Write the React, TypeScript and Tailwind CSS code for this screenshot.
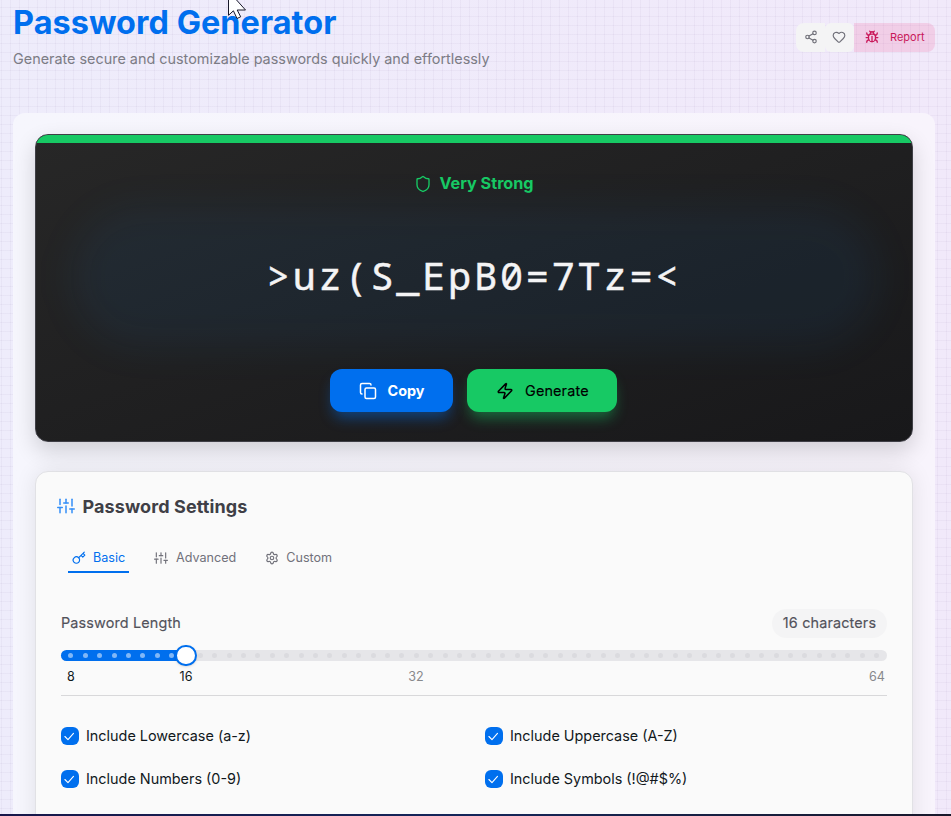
import type { ReactNode } from "react";
import { Bug, Copy, Heart, Settings, Share2, Shield, Zap } from "lucide-react";
import { FiKey, FiSliders } from "react-icons/fi";

const steps = Array.from({ length: 57 }, (_, i) => i + 8);
const selected = 16;

function Check({ children }: { children: ReactNode }) {
  return (
    <label className="flex h-[18px] items-center gap-[7px] text-[14.4px] leading-[18px] whitespace-nowrap text-[#11181c]">
      <span className="flex size-[18px] shrink-0 items-center justify-center rounded-[6px] bg-[#006fee] pr-px">
        <svg width="11" height="11" viewBox="0 0 17 18" fill="none" stroke="white" strokeWidth="1.8" strokeLinecap="round" strokeLinejoin="round">
          <polyline points="1 9 6 14 15 4" />
        </svg>
      </span>
      <span>{children}</span>
    </label>
  );
}

export default function App() {
  return (
    <div className="relative h-[816px] w-[951px] overflow-hidden bg-linear-to-r from-[#eeecfb] to-[#f1e9fa] font-['Inter',sans-serif]">
      <div className="absolute inset-0 bg-[linear-gradient(to_right,#64508c0c_1px,transparent_1px),linear-gradient(to_bottom,#64508c0c_1px,transparent_1px)] bg-[size:9px_9px] bg-[position:1px_7px]" />

      <div className="relative flex h-full flex-col">
        <header className="flex h-[113px] shrink-0 items-start justify-between pr-4 pl-[13px]">
          <div>
            <h1 className="mt-[3px] text-[32.4px] leading-10 font-bold tracking-[0.06px] text-[#006fee]">Password Generator</h1>
            <p className="mt-[5px] text-[14.4px] leading-[22px] text-[#7c7c85]">
              Generate secure and customizable passwords quickly and effortlessly
            </p>
          </div>
          <div className="mt-[23px] flex h-[29px]">
            <button className="flex w-[29px] items-center justify-center rounded-l-[8px] bg-[#f4f4f5] pb-px">
              <Share2 size={14} strokeWidth={2} className="text-[#71717a]" />
            </button>
            <button className="flex w-[29px] items-center justify-center rounded-[6px] bg-[#f4f4f5] pr-[2px] pb-px">
              <Heart size={14} strokeWidth={2} className="text-[#71717a]" />
            </button>
            <button className="flex w-[81px] items-center rounded-r-[8px] bg-[#f31260]/12 pb-px pl-[11px] text-[11px] text-[#c9185a]">
              <Bug size={14} strokeWidth={2.2} />
              <span className="ml-[11px]">Report</span>
            </button>
          </div>
        </header>

        <main className="ml-[13px] w-[922px] flex-1 rounded-t-[12px] bg-linear-to-r from-[#f6f6fd] to-[#f8f4fc] px-[22px] pt-[21px]">
          <section className="relative flex h-[308px] w-[878px] flex-col items-center overflow-hidden rounded-[13px] border border-[#3f3f46] bg-linear-to-br from-[#272727] to-[#18181a] shadow-[0_9px_22px_rgba(0,0,0,0.16)]">
            <div className="absolute top-[72px] left-[36px] h-[140px] w-[806px] rounded-full bg-[#0a7fe0]/7 blur-[18px]" />
            <div className="h-2 w-full shrink-0 bg-[#17c964]" />
            <div className="relative mt-[28px] flex h-6 items-center gap-[7px] text-[16.2px] font-bold text-[#17c964]">
              <Shield size={18} strokeWidth={1.8} className="relative top-px" />
              <span>Very Strong</span>
            </div>
            <div className="relative mt-[53px] flex h-[54px] items-center text-[38.5px] leading-[54px] tracking-[2.8px] whitespace-nowrap text-[#f4f4f5] font-['Noto_Sans_Mono','DejaVu_Sans_Mono',monospace] [-webkit-text-stroke:0.5px_#f4f4f5]">
              {">uz(S_EpB0=7Tz=<"}
            </div>
            <div className="relative mt-[67px] mr-[2px] flex gap-[14px]">
              <button className="flex h-[43px] w-[123px] items-center rounded-[12px] bg-[#006fee] pl-[29px] text-[14.4px] font-bold text-white shadow-[0_9px_14px_-3px_rgba(0,111,238,0.45)]">
                <Copy size={18} strokeWidth={2} />
                <span className="ml-[11px]">Copy</span>
              </button>
              <button className="flex h-[43px] w-[150px] items-center rounded-[12px] bg-[#17c964] pl-[29px] text-[14.4px] font-normal tracking-[0.15px] text-black shadow-[0_9px_14px_-3px_rgba(23,201,100,0.45)] [-webkit-text-stroke:0.15px_black]">
                <Zap size={18} strokeWidth={2} />
                <span className="ml-[11.5px]">Generate</span>
              </button>
            </div>
          </section>

          <section className="mt-[29px] h-[370px] w-[878px] rounded-t-[13px] border border-[#e1e1e5] bg-[#fafafa] px-[25px] shadow-[0_0_22px_rgba(0,0,0,0.09)]">
            <h2 className="-ml-1 flex h-6 translate-y-[22px] items-center gap-[7.5px] text-[18px] font-bold tracking-[0.1px] text-[#3f3f46]">
              <FiSliders size={18} className="text-[#338ef7]" />
              <span>Password Settings</span>
            </h2>
            <nav className="mt-[48px] ml-[7px] flex h-[29px] text-[12.6px] text-[#71717a]">
              <div className="flex w-[61px] items-center border-b-2 border-[#006fee] pl-1 text-[#006fee]">
                <FiKey size={14} />
                <span className="ml-[7px] pt-px">Basic</span>
              </div>
              <div className="ml-[25px] flex items-center pb-[2px]">
                <FiSliders size={14} />
                <span className="ml-[8px] pt-px">Advanced</span>
              </div>
              <div className="ml-[29px] flex items-center pb-[2px]">
                <Settings size={14} strokeWidth={2} />
                <span className="ml-[7px] pt-px">Custom</span>
              </div>
            </nav>

            <div className="mt-[36px] flex h-[29px] items-center justify-between text-[14.4px] font-normal tracking-[0.15px] text-[#52525b] [-webkit-text-stroke:0.15px_#52525b]">
              <span className="pb-[2px]">Password Length</span>
              <span className="flex h-[29px] w-[115px] items-center justify-center rounded-full bg-[#f4f4f5] pb-[2px]">16 characters</span>
            </div>
            <div className="relative mt-[12px] flex h-[11px] w-[826px] items-center justify-between overflow-visible rounded-full bg-[#e6e6e9] px-[7.4px]">
              <div className="absolute inset-y-0 left-0 w-[125px] rounded-l-full bg-[#006fee]" />
              {steps.map((n) => (
                <span key={n} className={n < selected ? "relative size-[5px] rounded-full bg-white/50" : "relative size-[5px] rounded-full bg-[#dbdbdf]"} />
              ))}
              <div className="absolute -top-[5.5px] left-[114.2px] size-[21.6px] rounded-full border-2 border-[#006fee] bg-white shadow-sm" />
            </div>
            <div className="relative mt-[7px] h-[18px] text-[12.6px] leading-[18px] text-[#11181c]">
              <span className="absolute left-[10px] -translate-x-1/2">8</span>
              <span className="absolute left-[125px] -translate-x-1/2">16</span>
              <span className="absolute left-[355px] -translate-x-1/2 text-[#88898c]">32</span>
              <span className="absolute left-[816px] -translate-x-1/2 text-[#88898c]">64</span>
            </div>
            <div className="mt-[9px] h-px w-full bg-[#d8d8da]" />
            <div className="mt-[31px] grid grid-cols-[424px_1fr] gap-y-[25px]">
              <Check>Include Lowercase (a-z)</Check>
              <Check>Include Uppercase (A-Z)</Check>
              <Check>Include Numbers (0-9)</Check>
              <Check>Include Symbols (!@#$%)</Check>
            </div>
          </section>
        </main>
      </div>

      <div className="absolute bottom-0 left-0 h-[2px] w-full bg-linear-to-r from-[#17174a] via-[#14265a] to-[#18182b]" />
      <svg className="absolute top-0 left-[227px]" width="22" height="20" viewBox="0 0 22 20">
        <path d="M1.5 -9V15.3L6.4 10.8L10 18.5L13.7 16.8L10.2 10H18.5Z" fill="white" stroke="#18182b" strokeWidth="1" />
      </svg>
    </div>
  );
}
